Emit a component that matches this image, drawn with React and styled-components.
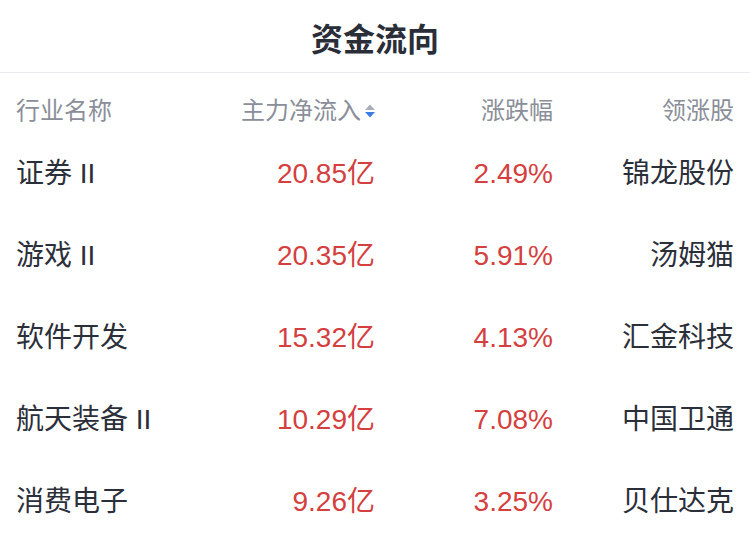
import React from 'react'
import styled, {createGlobalStyle} from 'styled-components'

const GlobalStyle = createGlobalStyle`
  html, body {
    margin: 0;
    padding: 0;
    background: #ffffff;
  }
  body {
    font-family: "Liberation Sans", "Noto Sans CJK SC", sans-serif;
  }
`

const rows = [
    {name: '证券 II', flow: '20.85亿', change: '2.49%', leader: '锦龙股份'},
    {name: '游戏 II', flow: '20.35亿', change: '5.91%', leader: '汤姆猫'},
    {name: '软件开发', flow: '15.32亿', change: '4.13%', leader: '汇金科技'},
    {name: '航天装备 II', flow: '10.29亿', change: '7.08%', leader: '中国卫通'},
    {name: '消费电子', flow: '9.26亿', change: '3.25%', leader: '贝仕达克'},
]

const SortIcon = () => (
    <svg width="12" height="18" viewBox="0 0 12 18">
        <path d="M6 2.5 L11 8 L1 8 Z" fill="#a9adb6" />
        <path d="M6 15.5 L11 10 L1 10 Z" fill="#3b7de0" />
    </svg>
)

const App = () => {
    return (
        <Panel>
            <GlobalStyle />
            <Title>资金流向</Title>
            <HeadRow>
                <HeadCell>行业名称</HeadCell>
                <HeadCell $right>
                    主力净流入
                    <SortWrap><SortIcon /></SortWrap>
                </HeadCell>
                <HeadCell $right>涨跌幅</HeadCell>
                <HeadCell $right>领涨股</HeadCell>
            </HeadRow>
            {rows.map((r) => (
                <Row key={r.name}>
                    <Cell>{r.name}</Cell>
                    <Cell $right $red>{r.flow}</Cell>
                    <Cell $right $red>{r.change}</Cell>
                    <Cell $right>{r.leader}</Cell>
                </Row>
            ))}
        </Panel>
    )
}

const Panel = styled.div`
width: 750px;
height: 548px;
background: #fff;
overflow: hidden;
`

const Title = styled.div`
height: 73px;
display: flex;
align-items: center;
justify-content: center;
font-size: 32px;
font-weight: bold;
color: #2a2e39;
border-bottom: 1px solid #e8e9ec;
padding-top: 2px;
box-sizing: border-box;
`

const grid = `
display: grid;
grid-template-columns: 184px 175px 178px 181px;
padding: 0 16px;
align-items: center;
`

const HeadRow = styled.div`
${grid}
height: 60px;
padding-top: 16px;
box-sizing: border-box;
`

const HeadCell = styled.div`
display: flex;
align-items: center;
justify-content: ${p => p.$right ? 'flex-end' : 'flex-start'};
font-size: 24px;
line-height: 32px;
color: #8a8e99;
`

const SortWrap = styled.span`
display: inline-flex;
margin-left: 3px;
margin-right: -1px;
`

const Row = styled.div`
${grid}
height: 82px;
`

const Cell = styled.div`
text-align: ${p => p.$right ? 'right' : 'left'};
font-size: 28px;
line-height: 36px;
color: ${p => p.$red ? '#d43f3f' : '#2b2f3a'};
white-space: nowrap;
`

export default App
